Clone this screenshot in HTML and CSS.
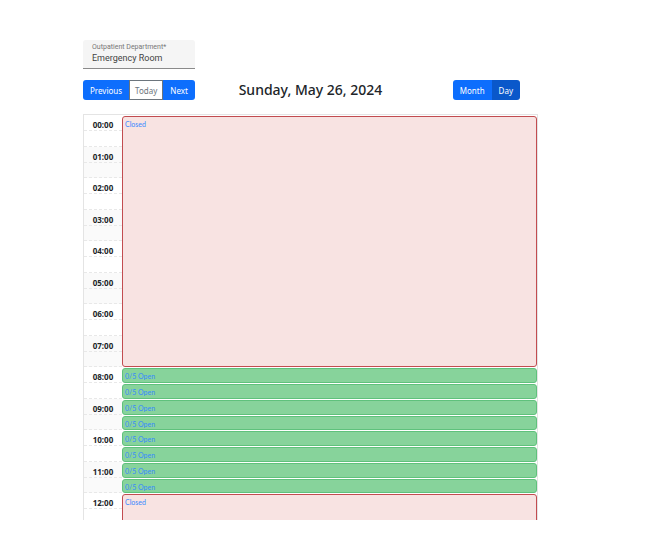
FILE: index.html
```html
<!DOCTYPE html>
<html lang="en">
<head>
<meta charset="utf-8">
<title>Outpatient schedule</title>
<link rel="stylesheet" href="styles.css">
</head>
<body>
<main class="page">
  <div class="field">
    <label class="field-label" for="department">Outpatient Department*</label>
    <input class="field-input" id="department" type="text" value="Emergency Room">
  </div>
  <div class="toolbar">
    <div class="btn-group">
      <button class="btn" type="button">Previous</button>
      <button class="btn btn-outline" type="button">Today</button>
      <button class="btn" type="button">Next</button>
    </div>
    <h1 class="title">Sunday, May 26, 2024</h1>
    <div class="btn-group views">
      <button class="btn" type="button">Month</button>
      <button class="btn btn-active" type="button">Day</button>
    </div>
  </div>
  <section class="calendar">
    <div class="day">
      <div class="hours">
        <div class="slot">00:00</div><div class="slot"></div>
        <div class="slot">01:00</div><div class="slot"></div>
        <div class="slot">02:00</div><div class="slot"></div>
        <div class="slot">03:00</div><div class="slot"></div>
        <div class="slot">04:00</div><div class="slot"></div>
        <div class="slot">05:00</div><div class="slot"></div>
        <div class="slot">06:00</div><div class="slot"></div>
        <div class="slot">07:00</div><div class="slot"></div>
        <div class="slot">08:00</div><div class="slot"></div>
        <div class="slot">09:00</div><div class="slot"></div>
        <div class="slot">10:00</div><div class="slot"></div>
        <div class="slot">11:00</div><div class="slot"></div>
        <div class="slot">12:00</div><div class="slot"></div>
      </div>
      <div class="events">
        <div class="event closed morning">Closed</div>
        <div class="event open">0/5 Open</div>
        <div class="event open">0/5 Open</div>
        <div class="event open">0/5 Open</div>
        <div class="event open">0/5 Open</div>
        <div class="event open">0/5 Open</div>
        <div class="event open">0/5 Open</div>
        <div class="event open">0/5 Open</div>
        <div class="event open">0/5 Open</div>
        <div class="event closed afternoon">Closed</div>
      </div>
    </div>
  </section>
</main>
</body>
</html>
```
FILE: styles.css
```css
* { box-sizing: border-box; }

body {
  margin: 0;
  background: #fff;
  color: #212529;
  font-family: "Noto Sans", "Open Sans", sans-serif;
}

.page { padding: 40px 119px 34px 83px; }

.field {
  display: flex;
  flex-direction: column;
  width: 112px;
  padding: 3px 9px 4px;
  background: #f5f5f5;
  border-bottom: 1px solid #8a8a8a;
  border-radius: 3px 3px 0 0;
  font-family: Roboto, sans-serif;
}

.field-label {
  font-size: 7px;
  line-height: 9px;
  color: #777;
  white-space: nowrap;
}

.field-input {
  width: 100%;
  height: 12px;
  padding: 0;
  border: 0;
  outline: 0;
  background: none;
  color: #444;
  font: 9px/12px Roboto, sans-serif;
}

.toolbar {
  display: grid;
  grid-template-columns: 1fr auto 1fr;
  align-items: center;
  margin: 11px 0 14px;
}

.title {
  margin: 0;
  font-size: 14px;
  line-height: 20px;
  font-weight: 500;
}

.btn-group { display: flex; }

.views {
  justify-content: flex-end;
  padding-right: 18px;
}

.btn {
  height: 20px;
  padding: 1px 7px 0;
  border: 0;
  background: #0d6efd;
  color: #fff;
  font: 8px/18px "Noto Sans", "Open Sans", sans-serif;
}

.btn:first-child { border-radius: 3px 0 0 3px; }
.btn:last-child { border-radius: 0 3px 3px 0; }

.btn-outline {
  border: 1px solid #6c757d;
  padding: 1px 5px 0;
  background: #fff;
  color: #6c757d;
}

.btn-active { background: #0a58ca; }

.calendar {
  height: calc(100vh - 148px);
  overflow: hidden;
  border: 1px solid #e4e4e4;
  border-bottom: 0;
}

.day {
  display: grid;
  grid-template-columns: 38px 1fr;
}

.hours,
.events {
  display: grid;
  grid-template-rows: repeat(6, 16px 16px 16px 15px) 16px 16px;
}

.slot {
  border-bottom: 1px dashed #e8e8e8;
  text-align: center;
  font-size: 8px;
  line-height: 19px;
  font-weight: 700;
}

.slot:nth-child(4n + 3),
.slot:nth-child(4n) { background: #fafafa; }

.event {
  margin-top: 1px;
  padding: 0 2px;
  border: 1px solid;
  border-radius: 3px;
  color: #3788ff;
  font: 7px/14px Lato, sans-serif;
}

.closed {
  background: #f8e3e2;
  border-color: #c24c50;
}

.open {
  background: #87d39b;
  border-color: #5fc17c;
}

.morning { grid-row: 1 / span 16; }
.afternoon { grid-row: 25 / span 2; }
```
